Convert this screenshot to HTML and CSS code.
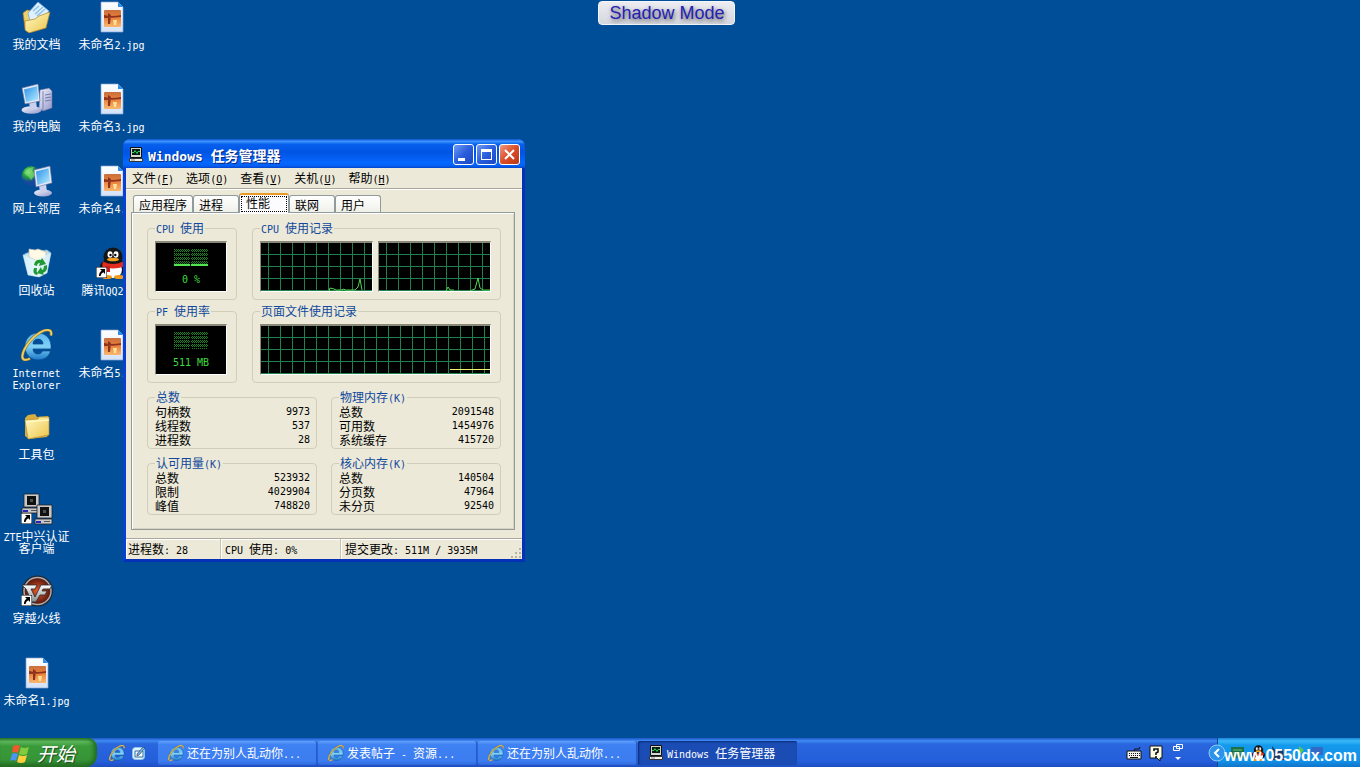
FILE: index.html
```html
<!DOCTYPE html>
<html lang="zh-CN">
<head>
<meta charset="utf-8">
<title>Windows 任务管理器</title>
<link rel="stylesheet" href="styles.css">
</head>
<body>
<svg class="defs" aria-hidden="true">
  <defs>
    <linearGradient id="gFolder" x1="0" y1="0" x2="1" y2="1"><stop offset="0" stop-color="#fffbc4"/><stop offset="1" stop-color="#edc34c"/></linearGradient>
    <linearGradient id="gScreen" x1="0" y1="0" x2="1" y2="1"><stop offset="0" stop-color="#2d8fe8"/><stop offset="1" stop-color="#b5f0ff"/></linearGradient>
    <linearGradient id="gCase" x1="0" y1="0" x2="1" y2="1"><stop offset="0" stop-color="#f5f5ff"/><stop offset="1" stop-color="#9298c8"/></linearGradient>
    <linearGradient id="gSun" x1="0" y1="0" x2="0" y2="1"><stop offset="0" stop-color="#c8703c"/><stop offset=".45" stop-color="#ea8038"/><stop offset="1" stop-color="#f8b870"/></linearGradient>
    <linearGradient id="gPaper" x1="0" y1="0" x2="0" y2="1"><stop offset="0" stop-color="#ffffff"/><stop offset="1" stop-color="#d3e2fa"/></linearGradient>
    <radialGradient id="gGlobe" cx=".35" cy=".3"><stop offset="0" stop-color="#9df29a"/><stop offset=".5" stop-color="#2aa43c"/><stop offset="1" stop-color="#14499c"/></radialGradient>
    <linearGradient id="gIe" x1="0" y1="0" x2="0" y2="1"><stop offset="0" stop-color="#58b4ea"/><stop offset=".5" stop-color="#7fd2f6"/><stop offset="1" stop-color="#1a78c8"/></linearGradient>
    <linearGradient id="gBin" x1="0" y1="0" x2="1" y2="0"><stop offset="0" stop-color="#a9d9ef"/><stop offset=".4" stop-color="#f4fcff"/><stop offset="1" stop-color="#b5d3e6"/></linearGradient>
    <linearGradient id="gMetal" x1="0" y1="0" x2="0" y2="1"><stop offset="0" stop-color="#ffffff"/><stop offset="1" stop-color="#84888c"/></linearGradient>
    <radialGradient id="gRed"><stop offset="0" stop-color="#e55a2c"/><stop offset="1" stop-color="#4a100a"/></radialGradient>
    <pattern id="grid" x="7" y="0" width="12" height="12" patternUnits="userSpaceOnUse"><path d="M.5 0V12M0 11.5H12" stroke="#22804c" fill="none" shape-rendering="crispEdges"/></pattern>
    <pattern id="dots" width="2" height="4" patternUnits="userSpaceOnUse"><path d="M0 0h1v1H0zM1 1h1v1H1zM0 2h1v1H0z" fill="#14881c"/></pattern>
    <symbol id="i-shortcut" viewBox="0 0 11 11"><path d="M0 0h11v11H0z" fill="#fff" stroke="#000"/><path d="M4 2h5v5L7.300 5.300Q5 6.500 4.500 9H3Q2.800 5.500 5.700 3.700z" fill="#000"/></symbol>
    <symbol id="i-docs" viewBox="0 0 32 32"><path d="M2 12l4-3 5 1 2 3v5L7 29l-3-2z" fill="#efd06a" stroke="#a9811e" stroke-width=".7"/><path d="M7 12L17 1l11 9-9 13-10-3z" fill="#dff1ff" stroke="#6faadd" stroke-width=".8"/><path d="M12 10l6-5M14 13l8-7M16 15l8-7" stroke="#8bbfe8" stroke-width="1.500"/><path d="M4 20l10-2 4-3 11-4-4 16-17 5-4-3z" fill="url(#gFolder)" stroke="#ad8328" stroke-width=".7"/></symbol>
    <symbol id="i-pc" viewBox="0 0 32 32"><path d="M19 7l9-2 3 3v17l-9 3-4-3z" fill="url(#gCase)" stroke="#646a9e" stroke-width=".6"/><path d="M22 8v19" stroke="#7d82b2"/><path d="M24 12l6-1M24 15l6-1M24 18l6-1" stroke="#727bab"/><ellipse cx="10.500" cy="27" rx="10" ry="3.800" fill="url(#gCase)"/><path d="M8 18l7-1 1 9-7 1z" fill="#cbd0ed"/><path d="M1 5l16-4 2 17-15 3z" fill="#e6eaf8" stroke="#666f9e" stroke-width=".6"/><path d="M3 6.500l13-3.200L17.500 16.500 5 19z" fill="url(#gScreen)"/></symbol>
    <symbol id="i-net" viewBox="0 0 32 32"><circle cx="10.500" cy="11" r="10" fill="url(#gGlobe)"/><path d="M3 8q4-6 10-6l-2 4 4 3-5 6-3-4z" fill="#7bd96f" opacity=".7"/><ellipse cx="22" cy="28" rx="9" ry="3.500" fill="url(#gCase)"/><path d="M18 20l7-1 1 8-7 1z" fill="#cbd0ed"/><path d="M13 5l16-4 2 17-16 4z" fill="#e6eaf8" stroke="#666f9e" stroke-width=".6"/><path d="M15 6.500l12.500-3.200L29 16.500 16.500 20z" fill="url(#gScreen)"/></symbol>
    <symbol id="i-bin" viewBox="0 0 32 32"><path d="M2 8l4-2 20-3 4 3-4 20-8 4-11-2z" fill="url(#gBin)" stroke="#81b1ca" stroke-width=".8"/><path d="M8 10V2l6 1 3-1 8 3v6l-9 3z" fill="#fff9e6" stroke="#b9bdb4" stroke-width=".7"/><path d="M2 8l12 5 16-7-4 20-8 4-11-2z" fill="#dff4fc" opacity=".75"/><path d="M13 18q1-6 7-5l1-2 4 6-7 2 1-3q-3 0-3 3zM26 18q1 6-4 8l1 2-7-2 4-6 1 3q2-1 2-4zM16 28q-5-1-3-7h3q-1 5 1 5z" fill="#1f9a32"/></symbol>
    <symbol id="i-ie" viewBox="0 0 32 32"><path fill-rule="evenodd" d="M17 4C9 4 4 10 4 17.500S9 31 17 31c6 0 11-3 12.500-9h-8c-1 2-2 3-4.500 3-3 0-5-2-5-5h18C31 10 25 4 17 4zm-5 11c0-3 2-5 5-5s5 2 5 5z" fill="url(#gIe)" stroke="#0b4b8e" stroke-width=".7"/><path d="M9 29.500C4 32 .5 31 1.500 26 3 18 11 8 19 3.500 26-.5 31.500 0 30 6.500" fill="none" stroke="#8a7638" stroke-width="3"/><path d="M9 29.500C4 32 .5 31 1.500 26 3 18 11 8 19 3.500 26-.5 31.500 0 30 6.500" fill="none" stroke="#f0cf62" stroke-width="1.800"/></symbol>
    <symbol id="i-folder" viewBox="0 0 32 32"><path d="M4 7l3-3 7-1 2 3 11-1 1 17-2 4-18 2-4-3z" fill="#d9ae3f"/><path d="M4 9l13-1 1-2h10v18L7 28z" fill="url(#gFolder)" stroke="#b58d31" stroke-width=".7"/><path d="M5 11l23-2" stroke="#fff7bb" stroke-width="1.500"/></symbol>
    <symbol id="i-image" viewBox="0 0 32 32"><path d="M5 1h17l5 5v25H5z" fill="url(#gPaper)" stroke="#87a8d2" stroke-width=".7"/><path d="M22 1v5h5z" fill="#2f8ee4"/><rect x="8" y="9" width="17" height="17" rx="1" fill="url(#gSun)"/><path d="M8 14q8 2 17 0v2q-9 1-17 1zM12 12l3 2-1 9h-2z" fill="#8e3220"/><path d="M17 19h4l-1 5h-2z" fill="#ffe29a"/></symbol>
    <symbol id="i-qq" viewBox="0 0 32 32"><ellipse cx="17" cy="20" rx="13" ry="9" fill="#111"/><ellipse cx="17" cy="23" rx="9" ry="8" fill="#fff"/><ellipse cx="17" cy="10" rx="9.500" ry="9.500" fill="#151515"/><ellipse cx="14" cy="7.500" rx="2.500" ry="3.200" fill="#fff"/><ellipse cx="20" cy="7.500" rx="2.500" ry="3.200" fill="#fff"/><circle cx="14.500" cy="8" r="1.200"/><circle cx="19.300" cy="8" r="1.200"/><ellipse cx="17" cy="12.500" rx="6" ry="1.800" fill="#f8a11c"/><path d="M7 14.500q10 5 20 0l1 5q-11 4-22 0z" fill="#e12c20"/><path d="M9 19h5v6h-5z" fill="#c61d18"/><ellipse cx="11" cy="30" rx="5" ry="2" fill="#f49a1a"/><ellipse cx="23" cy="30" rx="5" ry="2" fill="#f49a1a"/></symbol>
    <symbol id="i-zte" viewBox="0 0 32 32"><g id="zpc"><path d="M3 1h15v13H3zM1 15h17v5H1z" fill="#c8c8c8" stroke="#222" stroke-width=".8"/><path d="M6 3h9v9H6z" fill="#111"/><path d="M9 6h3v3H9z" fill="#4c5450"/><path d="M2 18h5" stroke="#2724b7" stroke-width="2"/><path d="M10 17.500h6" stroke="#555"/></g><use href="#zpc" x="13" y="11"/></symbol>
    <symbol id="i-cf" viewBox="0 0 32 32"><circle cx="16.500" cy="16" r="14.500" fill="url(#gRed)" stroke="#24272a" stroke-width="2"/><circle cx="16.500" cy="16" r="13.500" fill="none" stroke="#a9adb0" stroke-width="1.500"/><path d="M1 10h15l-2 4h-4l4 8 6-12h11l-2 4h-7l-1 2h5l-2 4h-5l-4 7h-4L5 14z" fill="url(#gMetal)" stroke="#292a2c" stroke-width=".8"/></symbol>
    <symbol id="i-task" viewBox="0 0 16 16"><path d="M2.500 .5h11v10h-11z" fill="#d8d8cf" stroke="#111"/><path d="M4 2h8v6H4z" fill="#071c12"/><path d="M4 5.500h2l1-2 2 3 1-2h2" fill="none" stroke="#35d257"/><path d="M1.500 11.500h13v3h-13z" fill="#f0f0e8" stroke="#333"/><path d="M3 13h4" stroke="#888"/></symbol>
    <symbol id="i-flag" viewBox="0 0 20 20"><path d="M3 3q4-2 7 0L8 10q-3-2-6 0z" fill="#ee5a2c"/><path d="M11 4q3 2 8 0l-2 7q-4 2-8 0z" fill="#80cc3e"/><path d="M2 11q3-2 6 0l-2 7q-3-2-6 0z" fill="#4a94f2"/><path d="M9 12q4 2 8 0l-2 7q-4 2-8 0z" fill="#ffcf3b"/></symbol>
    <symbol id="i-desk" viewBox="0 0 16 16"><rect x="1.500" y="2.500" width="12" height="12" rx="3" fill="#e4f3fb" stroke="#8cc4ec"/><path d="M4 6h8v6H4z" fill="#fff" stroke="#2b6ca2"/><path d="M6 9l6-7 2 1-6 7-2 1z" fill="#7bb5db" stroke="#234b71" stroke-width=".7"/></symbol>
  </defs>
</svg>

<main class="desktop">
  <ul class="icons">
    <li><a class="shortcut" href="#"><svg class="pic"><use href="#i-docs"/></svg><span>我的文档</span></a></li>
    <li><a class="shortcut" href="#"><svg class="pic"><use href="#i-pc"/></svg><span>我的电脑</span></a></li>
    <li><a class="shortcut" href="#"><svg class="pic"><use href="#i-net"/></svg><span>网上邻居</span></a></li>
    <li><a class="shortcut" href="#"><svg class="pic"><use href="#i-bin"/></svg><span>回收站</span></a></li>
    <li><a class="shortcut" href="#"><svg class="pic"><use href="#i-ie"/></svg><span><span class="en">Internet</span><br><span class="en">Explorer</span></span></a></li>
    <li><a class="shortcut" href="#"><svg class="pic"><use href="#i-folder"/></svg><span>工具包</span></a></li>
    <li><a class="shortcut" href="#"><svg class="pic"><use href="#i-zte"/><use href="#i-shortcut" y="20" width="11" height="11"/></svg><span><span class="en">ZTE</span>中兴认证<br>客户端</span></a></li>
    <li><a class="shortcut" href="#"><svg class="pic"><use href="#i-cf"/><use href="#i-shortcut" y="20" width="11" height="11"/></svg><span>穿越火线</span></a></li>
    <li><a class="shortcut" href="#"><svg class="pic"><use href="#i-image"/></svg><span>未命名<span class="en">1.jpg</span></span></a></li>
  </ul>
  <ul class="icons">
    <li><a class="shortcut" href="#"><svg class="pic"><use href="#i-image"/></svg><span>未命名<span class="en">2.jpg</span></span></a></li>
    <li><a class="shortcut" href="#"><svg class="pic"><use href="#i-image"/></svg><span>未命名<span class="en">3.jpg</span></span></a></li>
    <li><a class="shortcut" href="#"><svg class="pic"><use href="#i-image"/></svg><span>未命名<span class="en">4.jpg</span></span></a></li>
    <li><a class="shortcut" href="#"><svg class="pic"><use href="#i-qq"/><use href="#i-shortcut" y="20" width="11" height="11"/></svg><span>腾讯<span class="en">QQ2009</span></span></a></li>
    <li><a class="shortcut" href="#"><svg class="pic"><use href="#i-image"/></svg><span>未命名<span class="en">5.jpg</span></span></a></li>
  </ul>

  <div class="mode">Shadow Mode</div>

  <section class="window" aria-label="Windows 任务管理器">
    <header class="titlebar">
      <svg class="small"><use href="#i-task"/></svg>
      <h1><span class="en-title">Windows </span>任务管理器</h1>
      <button class="ctl" aria-label="最小化"><svg viewBox="0 0 19 19"><path d="M4 13h7v3H4z" fill="#fff"/></svg></button>
      <button class="ctl" aria-label="最大化"><svg viewBox="0 0 19 19"><path fill-rule="evenodd" d="M4 4h11v11H4zM5 7h9v7H5z" fill="#fff"/></svg></button>
      <button class="ctl close" aria-label="关闭"><svg viewBox="0 0 19 19"><path d="M5 5l9 9M14 5l-9 9" stroke="#fff" stroke-width="2"/></svg></button>
    </header>
    <nav class="menu">
      <button>文件<span class="en">(<u>F</u>)</span></button>
      <button>选项<span class="en">(<u>O</u>)</span></button>
      <button>查看<span class="en">(<u>V</u>)</span></button>
      <button>关机<span class="en">(<u>U</u>)</span></button>
      <button>帮助<span class="en">(<u>H</u>)</span></button>
    </nav>
    <div class="tabs" role="tablist">
      <button role="tab">应用程序</button>
      <button role="tab">进程</button>
      <button role="tab" class="active" aria-selected="true"><span>性能</span></button>
      <button role="tab">联网</button>
      <button role="tab">用户</button>
    </div>
    <div class="panel" role="tabpanel">
      <div class="usage">
        <fieldset>
          <legend><span class="en">CPU </span>使用</legend>
          <div class="meter"><svg viewBox="0 0 34 18"><path d="M0 0h16v15H0zM17 0h17v15H17z" fill="url(#dots)"/><path d="M0 15h16v2H0zM17 15h17v2H17z" fill="#4fe450"/></svg><span>0 %</span></div>
        </fieldset>
        <fieldset class="wide">
          <legend><span class="en">CPU </span>使用记录</legend>
          <div class="charts">
            <svg class="chart"><rect width="100%" height="100%" fill="url(#grid)"/><path d="M68 48l1-3 4 1 2 1h5l3-1 1 1h10l3-3 2-8 2 11" fill="none" stroke="#4fd84f"/></svg>
            <svg class="chart"><rect width="100%" height="100%" fill="url(#grid)"/><path d="M67 48l2-4 2 3h4M91 48l2-1 3-1 3-11 2 10 3 2h7" fill="none" stroke="#4fd84f"/></svg>
          </div>
        </fieldset>
      </div>
      <div class="usage">
        <fieldset>
          <legend><span class="en">PF </span>使用率</legend>
          <div class="meter"><svg viewBox="0 0 34 18"><path d="M0 0h16v17H0zM17 0h17v17H17z" fill="url(#dots)"/></svg><span>511 MB</span></div>
        </fieldset>
        <fieldset class="wide">
          <legend>页面文件使用记录</legend>
          <div class="charts">
            <svg class="chart"><rect width="100%" height="100%" fill="url(#grid)"/><path d="M189 43h60v1h-60z" fill="#f0f070"/></svg>
          </div>
        </fieldset>
      </div>
      <div class="stats">
        <fieldset>
          <legend>总数</legend>
          <table>
            <tr><th>句柄数</th><td>9973</td></tr>
            <tr><th>线程数</th><td>537</td></tr>
            <tr><th>进程数</th><td>28</td></tr>
          </table>
        </fieldset>
        <fieldset>
          <legend>物理内存<span class="en">(K)</span></legend>
          <table>
            <tr><th>总数</th><td>2091548</td></tr>
            <tr><th>可用数</th><td>1454976</td></tr>
            <tr><th>系统缓存</th><td>415720</td></tr>
          </table>
        </fieldset>
        <fieldset>
          <legend>认可用量<span class="en">(K)</span></legend>
          <table>
            <tr><th>总数</th><td>523932</td></tr>
            <tr><th>限制</th><td>4029904</td></tr>
            <tr><th>峰值</th><td>748820</td></tr>
          </table>
        </fieldset>
        <fieldset>
          <legend>核心内存<span class="en">(K)</span></legend>
          <table>
            <tr><th>总数</th><td>140504</td></tr>
            <tr><th>分页数</th><td>47964</td></tr>
            <tr><th>未分页</th><td>92540</td></tr>
          </table>
        </fieldset>
      </div>
    </div>
    <footer class="status">
      <span>进程数<span class="en">: 28</span></span>
      <span><span class="en">CPU </span>使用<span class="en">: 0%</span></span>
      <span>提交更改<span class="en">: 511M / 3935M</span></span>
      <svg class="grip" viewBox="0 0 12 12"><path d="M9 1h2v2H9zM5 5h2v2H5zM9 5h2v2H9zM1 9h2v2H1zM5 9h2v2H5zM9 9h2v2H9z" fill="#b8b4a0"/></svg>
    </footer>
  </section>
</main>

<footer class="taskbar">
  <button class="start"><svg><use href="#i-flag"/></svg><span>开始</span></button>
  <div class="quick">
    <a href="#" aria-label="Internet Explorer"><svg class="small"><use href="#i-ie"/></svg></a>
    <a href="#" aria-label="显示桌面"><svg class="small"><use href="#i-desk"/></svg></a>
  </div>
  <div class="tasks">
    <button><svg class="small"><use href="#i-ie"/></svg><span>还在为别人乱动你<span class="en">...</span></span></button>
    <button><svg class="small"><use href="#i-ie"/></svg><span>发表帖子<span class="en"> - </span>资源<span class="en">...</span></span></button>
    <button><svg class="small"><use href="#i-ie"/></svg><span>还在为别人乱动你<span class="en">...</span></span></button>
    <button class="current"><svg class="small"><use href="#i-task"/></svg><span><span class="en">Windows </span>任务管理器</span></button>
  </div>
  <div class="lang">
    <svg class="small" viewBox="0 0 16 16"><path d="M8 6q0-3 3-2t3-2" fill="none" stroke="#111"/><path d="M1 6h14v8H1z" fill="#f4f4ec" stroke="#111"/><path d="M3 8.500h11M3 10.500h11" stroke="#111" stroke-dasharray="1 1"/><path d="M4 12.500h8" stroke="#111"/></svg>
    <svg class="small" viewBox="0 0 16 16"><path d="M2 1h12v12h-2v3l-3-3H2z" fill="#ffffe8" stroke="#111"/><path d="M6 6V4h4v3L8 8v2M8 11v2" fill="none" stroke="#111" stroke-width="1.600"/></svg>
    <svg class="opts" viewBox="0 0 12 20"><path d="M4.500 1.500h6v4h-6zM1.500 3.500h6v4h-6z" fill="#2a65dc" stroke="#fff"/><path d="M3 14h6l-3 3z" fill="#fff"/></svg>
  </div>
  <div class="tray">
    <button class="expand" aria-label="显示隐藏的图标"><svg viewBox="0 0 18 18"><circle cx="9" cy="9" r="8" fill="#2b93ec" stroke="#8ccbf8"/><path d="M11 5L7 9l4 4" fill="none" stroke="#fff" stroke-width="2"/></svg></button>
    <svg class="small" viewBox="0 0 16 16"><path d="M1 2h13v11H1z" fill="#1c7045"/><path d="M3 5h9M3 8h9" stroke="#5fc285"/></svg>
    <svg class="small"><use href="#i-qq"/></svg>
    <svg class="small" viewBox="0 0 16 16"><path d="M2 1l5 6 6-3 1 11H3z" fill="#20395f"/></svg>
    <svg class="small" viewBox="0 0 16 16"><path d="M9 1l5 4-5 5z" fill="#57c85c"/></svg>
    <svg class="small" viewBox="0 0 16 16"><path d="M1 2h12v8H1z" fill="#316bc7"/></svg>
    <strong class="mark">www.0550dx.com</strong>
  </div>
</footer>
</body>
</html>
```

FILE: styles.css
```css
* { box-sizing: border-box; }
body {
  margin: 0;
  min-height: 100vh;
  display: flex;
  flex-direction: column;
  overflow: hidden;
  background: #004e98;
  font: 12px/12px "Noto Sans CJK SC", sans-serif;
  color: #000;
}
button { font: inherit; color: inherit; border: 0; background: none; padding: 0; }
ul { list-style: none; margin: 0; padding: 0; }
.defs { position: absolute; width: 0; height: 0; }
.en { font-family: "DejaVu Sans Mono", monospace; font-size: 10px; line-height: 0; white-space: pre; }
.small { width: 16px; height: 16px; flex: none; }

.desktop { flex: 1; position: relative; display: flex; gap: 2px; }
.icons { width: 73px; }
.icons li { height: 82px; }
.shortcut {
  display: flex;
  flex-direction: column;
  align-items: center;
  gap: 5px;
  padding-top: 1px;
  color: #fff;
  text-align: center;
  text-decoration: none;
  white-space: nowrap;
}
.pic { width: 32px; height: 32px; }

.mode {
  position: absolute;
  top: 1px;
  left: 44%;
  padding: 0 10px;
  border: 1px solid #f4f6fa;
  border-radius: 4px;
  background: linear-gradient(#ececf2, #d5d7df);
  color: #2420b4;
  font: 18px/22px "Liberation Sans", sans-serif;
  text-shadow: 1px 2px 4px #555;
}

.window {
  position: absolute;
  top: 139px;
  left: 123px;
  width: 402px;
  border: 3px solid #0a3fd6;
  border-top: 0;
  border-right-color: #0530b8;
  border-bottom-color: #0530b8;
  border-radius: 7px 7px 0 0;
  background: #ece9d8;
}
.titlebar {
  display: flex;
  align-items: center;
  gap: 2px;
  height: 29px;
  margin: 0 -3px;
  padding: 2px 5px 0;
  border-radius: 7px 7px 0 0;
  background: linear-gradient(#0a4fd0, #3d95ff 8%, #0860ee 18%, #0054e3 45%, #0568ff 82%, #0560f5 92%, #0346cc);
  color: #fff;
}
.titlebar h1 { flex: 1; margin: 0 0 0 2px; font-size: 14px; line-height: 16px; font-weight: bold; text-shadow: 1px 1px #0a2a80; }
.en-title { font-family: "DejaVu Sans Mono", monospace; font-size: 13px; line-height: 0; }
.ctl {
  width: 21px;
  height: 21px;
  border: 1px solid #fff;
  border-radius: 3px;
  background: linear-gradient(135deg, #6f9cf5, #2a5edc 50%, #1c48c4);
}
.ctl svg { display: block; width: 19px; height: 19px; }
.close { background: linear-gradient(135deg, #f09a80, #da4c28 50%, #b83818); }

.menu { display: flex; gap: 12px; height: 22px; padding: 0 6px 2px; border-bottom: 1px solid #fff; box-shadow: inset 0 -1px #aca899; }
.tabs { display: flex; align-items: flex-end; height: 22px; padding: 0 7px; }
.tabs button {
  min-width: 46px;
  height: 17px;
  padding: 1px 5px 0;
  border: 1px solid #919b9c;
  border-bottom: 0;
  border-radius: 3px 3px 0 0;
  background: linear-gradient(#fff, #f0f0ea);
  text-align: left;
}
.tabs .active {
  position: relative;
  width: 50px;
  height: 20px;
  margin-bottom: -1px;
  padding: 0 1px;
  border-top: 2px solid #e89a28;
  background: #fcfcfe;
}
.active span { display: block; height: 16px; padding: 0 4px; border: 1px dotted #000; }
.panel {
  display: grid;
  gap: 5px;
  margin: 0 7px 8px 5px;
  padding: 9px 13px 14px 15px;
  border: 1px solid #919b9c;
  box-shadow: inset 1px 1px #fff, inset -1px -1px #d8d4c0;
}
.usage { display: grid; grid-template-columns: 90px 1fr; gap: 15px; }
fieldset { min-width: 0; margin: 0; padding: 7px 9px 7px 7px; border: 1px solid #d0cdb9; border-radius: 4px; }
legend { height: 12px; padding: 0 1px; color: #0f489c; white-space: nowrap; }
.meter {
  display: flex;
  flex-direction: column;
  align-items: center;
  gap: 7px;
  height: 51px;
  padding-top: 6px;
  border: 1px solid #fff;
  border-top: 2px solid #8a8878;
  border-left-color: #8a8878;
  background: #000;
  color: #3fdc3f;
  font: 10px/12px "DejaVu Sans Mono", monospace;
}
.meter svg { flex: none; width: 34px; height: 18px; }
.charts { display: flex; gap: 5px; }
.chart {
  flex: 1;
  width: 0;
  height: 51px;
  border: 1px solid #fff;
  border-top: 2px solid #8a8878;
  border-left-color: #8a8878;
  background: #000;
}
.stats { display: grid; grid-template-columns: 1fr 1fr; gap: 8px 14px; padding-top: 3px; }
.stats fieldset { padding: 2px 6px 1px 7px; }
table { width: 100%; border-collapse: collapse; }
th, td { padding: 0; line-height: 14px; height: 14px; }
th { font-weight: normal; text-align: left; }
td { text-align: right; font-family: "DejaVu Sans Mono", monospace; font-size: 10px; }
.status { display: flex; align-items: stretch; height: 21px; border-top: 1px solid #aca899; box-shadow: inset 0 1px #fff; line-height: 20px; }
.status > span { padding: 0 4px; border-left: 1px solid #c8c4b0; box-shadow: inset 1px 0 #fff; white-space: nowrap; }
.status > span:nth-child(1) { width: 94px; padding-left: 2px; border: 0; }
.status > span:nth-child(2) { width: 120px; }
.status > span:nth-child(3) { flex: 1; }
.grip { width: 12px; height: 12px; align-self: flex-end; }

.taskbar {
  display: flex;
  height: 29px;
  background: linear-gradient(#1c55c8, #3f8cf3 10%, #2a66de 20%, #245edb 80%, #1d4ec0);
  color: #fff;
}
.start {
  display: flex;
  align-items: center;
  gap: 7px;
  width: 97px;
  padding: 0 10px;
  border-radius: 0 9px 12px 0;
  background: linear-gradient(#2f7a2f, #5cb85c 12%, #3a9a3a 28%, #369436 75%, #256c25);
  box-shadow: inset -3px 0 4px #1f6b1f;
  font-size: 19px;
  font-style: italic;
  text-shadow: 1px 1px 1px #1c4a1c;
}
.start svg { width: 20px; height: 20px; }
.start span { line-height: 24px; }
.quick { display: flex; align-items: center; gap: 6px; width: 61px; padding-left: 12px; }
.quick a { display: flex; }
.tasks { display: flex; flex: 1; gap: 1px; padding: 3px 0 2px; }
.tasks button {
  display: flex;
  align-items: center;
  gap: 3px;
  width: 159px;
  padding: 0 10px;
  border-radius: 2px;
  background: linear-gradient(#62a0fb, #3f82f3 15%, #3b7cf0 85%, #2f68d8);
  box-shadow: inset -1px 0 #2a5cc8;
  white-space: nowrap;
}
.tasks .current { background: #1b4cb4; box-shadow: inset 1px 1px 2px #0c2c78; }
.lang { display: flex; align-items: center; gap: 6px; padding-right: 33px; }
.opts { width: 12px; height: 20px; margin-left: 2px; }
.tray {
  position: relative;
  display: flex;
  align-items: center;
  gap: 4px;
  width: 143px;
  border-left: 1px solid #0d4a9c;
  background: linear-gradient(#1a86da, #3ab8f8 10%, #149aec 25%, #1290e8 80%, #0f74c8);
}
.expand { width: 18px; height: 18px; margin-left: -10px; }
.expand svg { display: block; width: 18px; height: 18px; }
.mark {
  position: absolute;
  right: 3px;
  bottom: 0;
  font: bold 16px/22px "Liberation Sans", sans-serif;
}
```
